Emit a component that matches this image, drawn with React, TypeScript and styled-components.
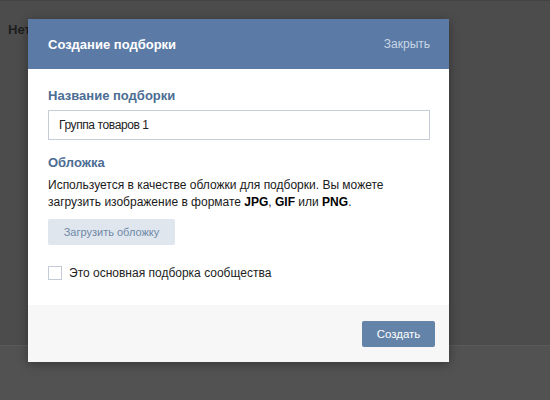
import React from 'react'
import styled, { createGlobalStyle } from 'styled-components'

const GlobalStyle = createGlobalStyle`
  html, body {
    margin: 0;
    padding: 0;
    background: #4d4d4d;
    font-family: 'Liberation Sans', Arial, sans-serif;
  }
`

const Screen = styled.div`
  position: relative;
  width: 550px;
  height: 400px;
  overflow: hidden;
  background: #525252;
`

const Page = styled.div`
  height: 346px;
  background: #4c4c4c;
  border-top: 1px solid #444444;
  border-bottom: 1px solid #5a5a5a;
  padding: 21px 8px 0;
  box-sizing: border-box;
`

const PageText = styled.div`
  font-size: 13px;
  font-weight: bold;
  color: #1e1e1e;
`

const Modal = styled.div`
  position: absolute;
  left: 28px;
  top: 19px;
  width: 421px;
  background: #ffffff;
  box-shadow: 0 2px 10px rgba(0, 0, 0, 0.35);
  display: flex;
  flex-direction: column;
`

const Header = styled.div`
  height: 50px;
  background: #5b7ba6;
  display: flex;
  align-items: center;
  justify-content: space-between;
  padding: 0 19px 0 20px;
`

const Title = styled.div`
  color: #ffffff;
  font-size: 13px;
  font-weight: bold;
`

const Close = styled.div`
  color: #c9d6e5;
  font-size: 12px;
`

const Body = styled.div`
  padding: 18px 19px 0 20px;
  height: 236px;
  box-sizing: border-box;
`

const Label = styled.div<{ $gap?: number }>`
  color: #4c6d94;
  font-size: 13px;
  font-weight: bold;
  line-height: 18px;
  margin-top: ${(p) => p.$gap ?? 0}px;
`

const Input = styled.div`
  margin-top: 5px;
  height: 30px;
  box-sizing: border-box;
  border: 1px solid #c5ced8;
  padding: 0 10px;
  display: flex;
  align-items: center;
  font-size: 12px;
  letter-spacing: -0.4px;
  color: #222222;
`

const Text = styled.div`
  margin-top: 5px;
  font-size: 12px;
  line-height: 17px;
  color: #1a1a1a;

  b {
    color: #000000;
  }
`

const UploadButton = styled.div`
  margin-top: 8px;
  width: 127px;
  height: 26px;
  border-radius: 2px;
  background: #dfe6ee;
  color: #6f88a6;
  font-size: 11px;
  display: flex;
  align-items: center;
  justify-content: center;
`

const CheckRow = styled.label`
  margin-top: 21px;
  display: flex;
  align-items: center;
  gap: 7px;
  font-size: 12px;
  color: #222222;
`

const Box = styled.span`
  width: 12px;
  height: 12px;
  border: 1px solid #c3ccd6;
  background: #ffffff;
`

const Footer = styled.div`
  height: 57px;
  background: #f7f7f7;
  display: flex;
  align-items: center;
  justify-content: flex-end;
  padding: 0 14px 0 0;
`

const PrimaryButton = styled.div`
  width: 73px;
  height: 26px;
  border-radius: 2px;
  background: #6383a8;
  color: #ffffff;
  font-size: 11.5px;
  display: flex;
  align-items: center;
  justify-content: center;
`

export default function App() {
  return (
    <Screen>
      <GlobalStyle />
      <Page>
        <PageText>Нет</PageText>
      </Page>
      <Modal>
        <Header>
          <Title>Создание подборки</Title>
          <Close>Закрыть</Close>
        </Header>
        <Body>
          <Label>Название подборки</Label>
          <Input>Группа товаров 1</Input>
          <Label $gap={14}>Обложка</Label>
          <Text>
            Используется в качестве обложки для подборки. Вы можете загрузить изображение в
            формате <b>JPG</b>, <b>GIF</b> или <b>PNG</b>.
          </Text>
          <UploadButton>Загрузить обложку</UploadButton>
          <CheckRow>
            <Box />
            Это основная подборка сообщества
          </CheckRow>
        </Body>
        <Footer>
          <PrimaryButton>Создать</PrimaryButton>
        </Footer>
      </Modal>
    </Screen>
  )
}
